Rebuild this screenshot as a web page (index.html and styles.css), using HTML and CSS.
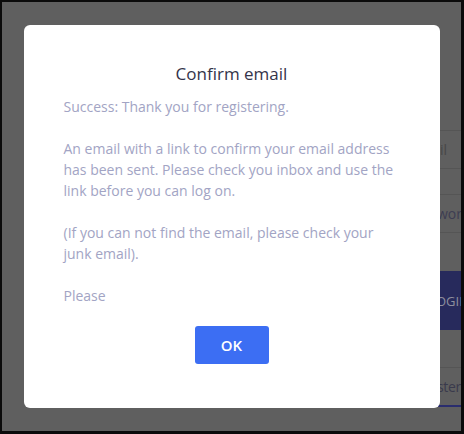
FILE: index.html
```html
<!DOCTYPE html>
<html lang="en">
<head>
<meta charset="utf-8">
<title>Confirm email</title>
<link rel="stylesheet" href="styles.css">
</head>
<body>
  <div class="page">
    <div class="login-form">
      <div class="field field-email">il</div>
      <div class="field field-password">wor</div>
      <div class="login-btn">OGIN</div>
      <div class="register">ster</div>
    </div>
  </div>
  <div class="overlay">
    <div class="modal" role="dialog">
      <h2 class="modal-title">Confirm email</h2>
      <div class="modal-body">
        <p>Success: Thank you for registering.</p>
        <p>An email with a link to confirm your email address has been sent. Please check you inbox and use the link before you can log on.</p>
        <p>(If you can not find the email, please check your junk email).</p>
        <p>Please</p>
      </div>
      <div class="modal-actions">
        <button class="ok-btn" type="button">OK</button>
      </div>
    </div>
  </div>
</body>
</html>
```

FILE: styles.css
```css
* { box-sizing: border-box; }

html, body {
  margin: 0;
  padding: 0;
}

body {
  position: relative;
  width: 464px;
  height: 434px;
  overflow: hidden;
  border-style: solid;
  border-color: #0b0b0b;
  border-width: 2px 3px 3px 2px;
  background: #5f5f5f;
  font-family: "Open Sans", "Liberation Sans", sans-serif;
}

.page {
  display: flex;
  justify-content: flex-end;
  height: 100%;
}

.login-form {
  width: 25px;
  overflow: hidden;
  padding-top: 128px;
  display: flex;
  flex-direction: column;
  font-size: 14px;
  white-space: nowrap;
}

.field {
  height: 39px;
  border-top: 1px solid #555555;
  border-bottom: 1px solid #555555;
  display: flex;
  align-items: center;
}

.field-email {
  padding-left: 4px;
  color: #474747;
}

.field-password {
  margin-top: 25px;
  padding-left: 1px;
  color: #3d3d52;
}

.login-btn {
  margin-top: 38px;
  height: 59px;
  background: #272a5c;
  color: #8e8f9e;
  display: flex;
  align-items: center;
  padding-left: 0;
  font-size: 13px;
  font-weight: 500;
}

.register {
  margin-top: 37px;
  height: 40px;
  border-top: 1px solid #555555;
  border-bottom: 2px solid #2a2d6e;
  color: #3a3a4c;
  display: flex;
  align-items: center;
  padding-left: 1px;
  font-size: 14px;
  letter-spacing: -0.3px;
}

.overlay {
  position: absolute;
  inset: 0;
  display: flex;
  align-items: center;
  justify-content: center;
}

.modal {
  width: 416px;
  height: 383px;
  background: #ffffff;
  border-radius: 6px;
  padding: 37px 40px 44px;
  display: flex;
  flex-direction: column;
}

.modal-title {
  margin: 0;
  text-align: center;
  font-size: 17px;
  font-weight: 500;
  line-height: 24px;
  color: #34344a;
}

.modal-body {
  margin-top: 10px;
  font-size: 14px;
  line-height: 21px;
  color: #a2a4c4;
}

.modal-body p {
  margin: 0 0 21px;
}

.modal-body p:last-child {
  margin-bottom: 0;
}

.modal-actions {
  margin-top: 20px;
  display: flex;
  justify-content: center;
}

.ok-btn {
  width: 74px;
  height: 38px;
  border: 0;
  border-radius: 3px;
  background: #3c6ef3;
  color: #ffffff;
  font-family: inherit;
  font-size: 15px;
  font-weight: 600;
  cursor: pointer;
}
```
